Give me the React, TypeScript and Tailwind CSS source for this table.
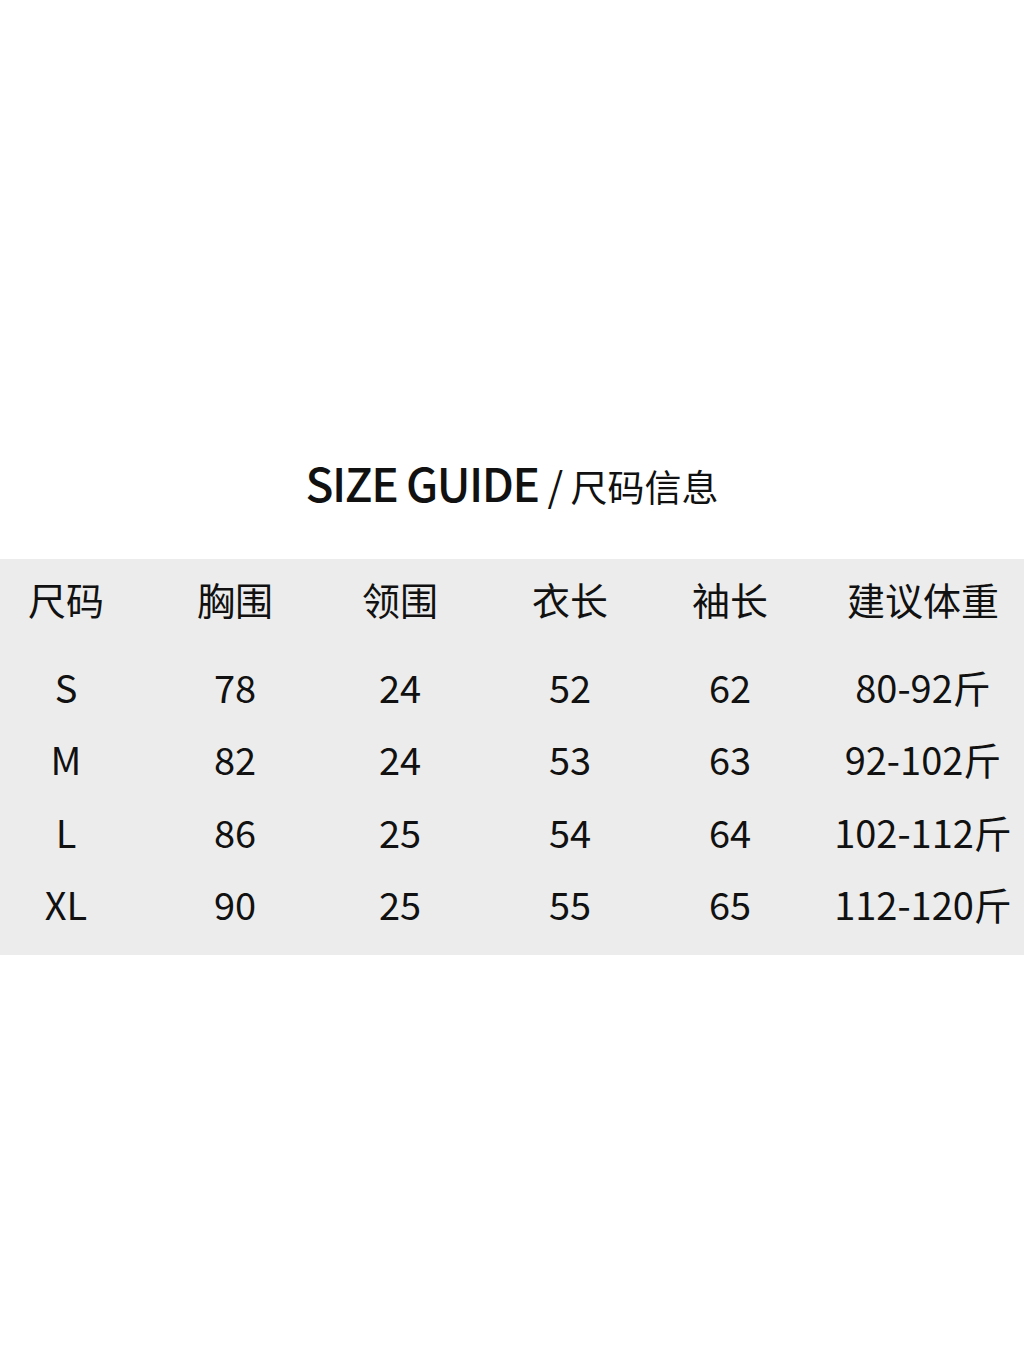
import React from "react";

const font = { fontFamily: '"Noto Sans CJK SC", "Noto Sans", sans-serif' };

const headers = ["尺码", "胸围", "领围", "衣长", "袖长", "建议体重"];
const rows = [
  ["S", "78", "24", "52", "62", "80-92斤"],
  ["M", "82", "24", "53", "63", "92-102斤"],
  ["L", "86", "25", "54", "64", "102-112斤"],
  ["XL", "90", "25", "55", "65", "112-120斤"],
];

const colCls = ["text-center", "text-center", "text-center", "text-center", "text-center", "text-center pl-[40px]"];

export default function App() {
  return (
    <div className="w-[1024px] h-[1365px] bg-white text-[#111]" style={font}>
      <div className="pt-[452px] h-[559px]">
        <h1 className="text-center text-[46px] leading-[60px] font-medium tracking-[-1.5px]">
          SIZE GUIDE <span className="font-normal text-[40px]">/</span>{" "}
          <span className="font-normal tracking-normal text-[37px]">尺码信息</span>
        </h1>
      </div>
      <div className="bg-[#ececec] h-[396px] pb-[13px]">
        <div className="grid grid-cols-[132px_206px_124px_216px_104px_1fr] h-[78px] items-center text-[38px]">
          {headers.map((h, i) => (
            <div key={i} className={colCls[i]}>{h}</div>
          ))}
        </div>
        <div className="mt-[13px]">
          {rows.map((r, ri) => (
            <div key={ri} className="grid grid-cols-[132px_206px_124px_216px_104px_1fr] h-[72.5px] items-center text-[38px]">
              {r.map((c, i) => (
                <div key={i} className={colCls[i]}>{c}</div>
              ))}
            </div>
          ))}
        </div>
      </div>
    </div>
  );
}
